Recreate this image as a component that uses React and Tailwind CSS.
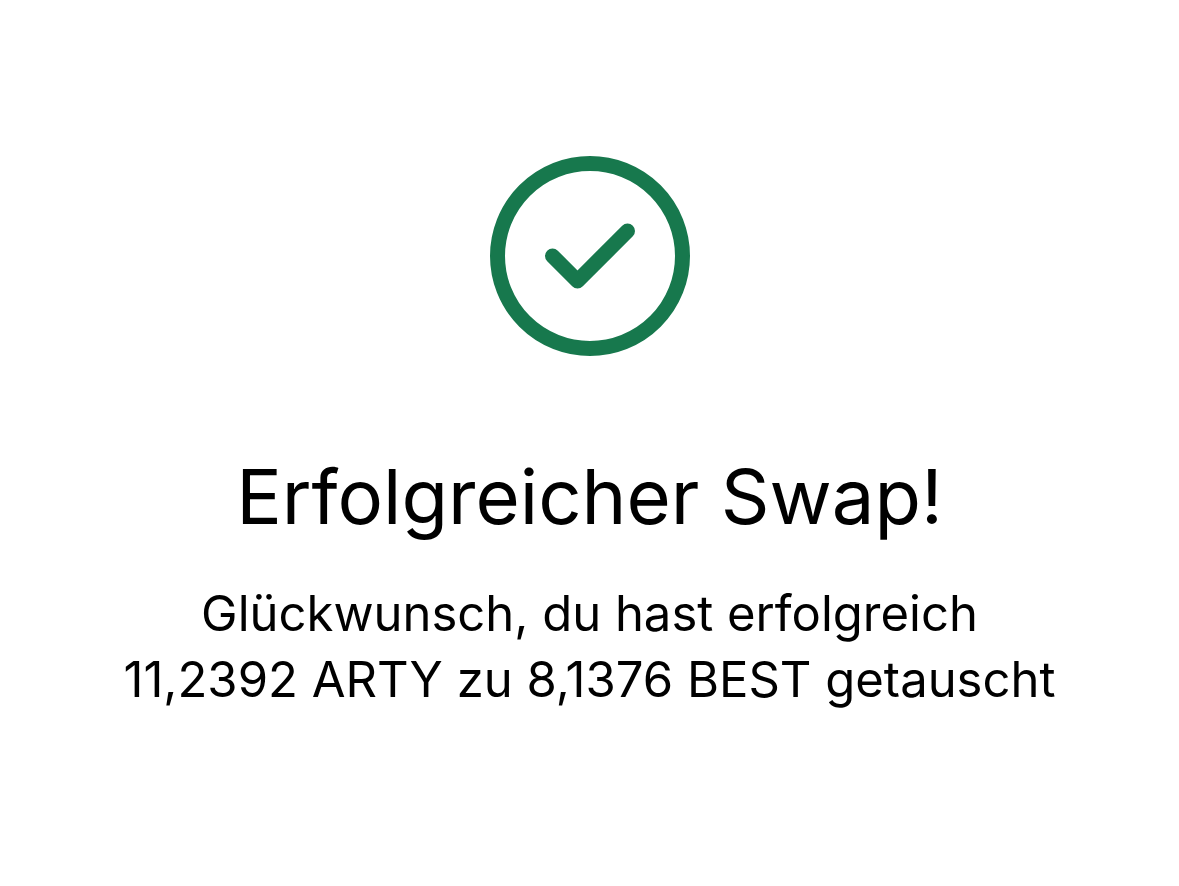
export default function App() {
  return (
    <main className="flex min-h-screen flex-col items-center bg-white px-6 pt-[156px] text-center font-['Inter',sans-serif] text-black">
      <svg className="size-[200px] shrink-0" viewBox="0 0 200 200" fill="none" stroke="#17784d" strokeWidth="15" strokeLinecap="round" strokeLinejoin="round" aria-hidden="true">
        <circle cx="100" cy="100" r="92.5" />
        <path d="M62.5 100 87.5 125 137.5 75" />
      </svg>
      <h1 className="mt-[90px] text-[76px] leading-[100px]">Erfolgreicher Swap!</h1>
      <p className="mt-[35px] text-[49px] leading-[66px]">
        Glückwunsch, du hast erfolgreich
        <br />
        11,2392 ARTY zu 8,1376 BEST getauscht
      </p>
    </main>
  );
}
